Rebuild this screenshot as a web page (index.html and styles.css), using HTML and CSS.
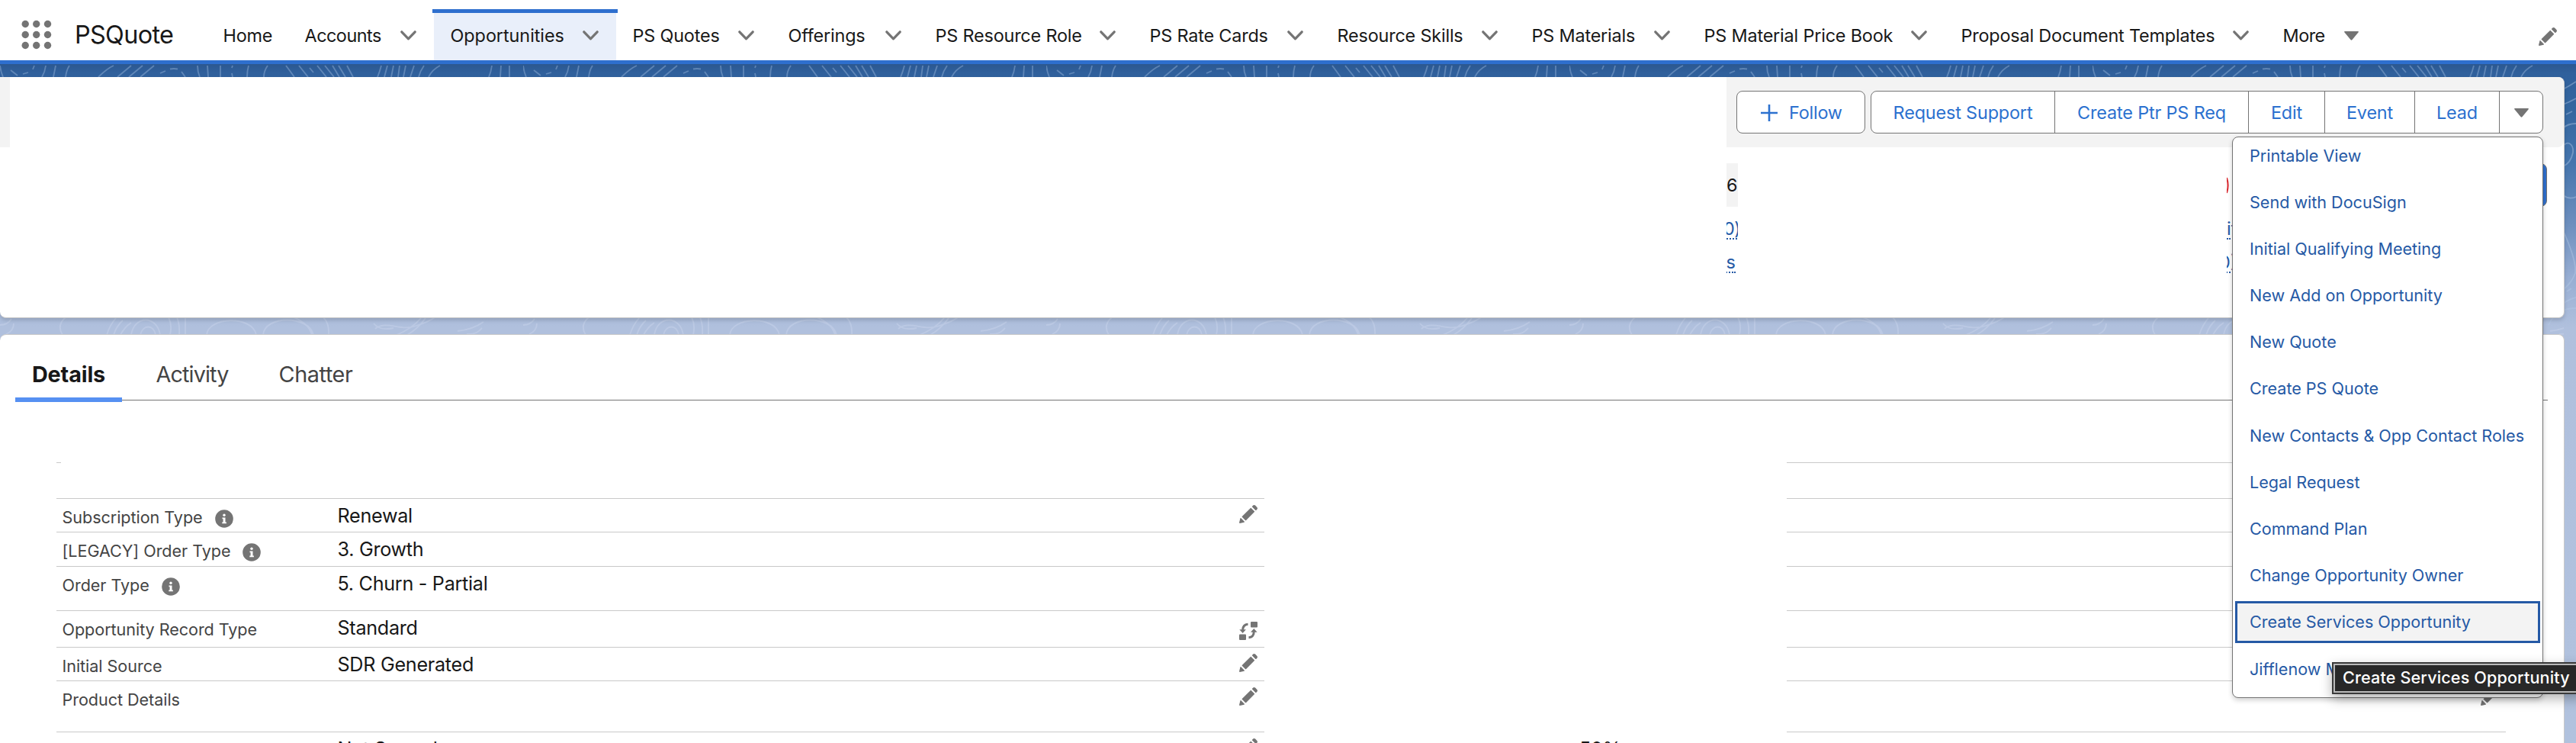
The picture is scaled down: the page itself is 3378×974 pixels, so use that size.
FILE: index.html
```html
<!DOCTYPE html>
<html lang="en">
<head>
<meta charset="utf-8">
<title>PSQuote</title>
<link rel="stylesheet" href="styles.css">
</head>
<body>
<svg class="defs" width="0" height="0">
  <symbol id="chev" viewBox="0 0 21 13"><path d="M1.8 1.8l8.7 9 8.7-9" fill="none" stroke="#747474" stroke-width="3.2" stroke-linecap="round" stroke-linejoin="round"/></symbol>
  <symbol id="down" viewBox="0 0 19 12"><path d="M1 0h17c.9 0 1.200.7.7 1.300l-8.300 9.900c-.5.600-1.300.6-1.800 0L.3 1.300C-.2.700.1 0 1 0z" fill="#747474"/></symbol>
  <symbol id="edit" viewBox="0 0 52 52"><path fill="#747474" d="M9.500 33.400l8.900 8.900c.4.400 1 .4 1.400 0L42 20c.4-.4.4-1 0-1.400l-8.800-8.800c-.4-.4-1-.4-1.400 0L9.500 32.100c-.4.400-.4 1 0 1.300zM36.100 5.700c-.4.400-.4 1 0 1.400l8.800 8.800c.4.400 1 .4 1.400 0l2.500-2.500c1.600-1.500 1.600-3.900 0-5.500l-4.700-4.700c-1.600-1.600-4.100-1.600-5.700 0l-2.300 2.500zM2.100 48.200c-.2 1 .7 1.900 1.700 1.700l10.900-2.600c.4-.1.7-.3.9-.5l.2-.2c.2-.2.3-.9-.1-1.300l-9-9c-.4-.4-1.100-.3-1.300-.1l-.2.200c-.3.300-.4.600-.5.900L2.100 48.200z"/></symbol>
  <symbol id="info" viewBox="0 0 24 24"><circle cx="12" cy="12" r="11.800" fill="#747474"/><circle cx="12" cy="7.200" r="1.700" fill="#fff"/><path d="M9.500 10.400h4v6h1.400v1.800H9.300v-1.800h1.300v-4.200H9.500z" fill="#fff"/></symbol>
  <symbol id="swap" viewBox="0 0 24 24"><g fill="#747474"><rect x="15" y="0" width="9" height="7.500" rx="1"/><rect x="0" y="16.500" width="9" height="7.500" rx="1"/><path d="M.3 10.200h8.600L4.600 15zM15 13.800h8.600L19.300 9z"/></g><path d="M11.500 3.200c-4.500.3-6.700 3-6.900 7.500M12.500 20.800c4.500-.3 6.600-3 6.800-7.500" fill="none" stroke="#747474" stroke-width="3"/></symbol>
</svg>

<header class="nav">
  <svg class="launcher" viewBox="0 0 40 40" fill="#747474"><circle cx="5.200" cy="5.500" r="4.700"/><circle cx="19.700" cy="5.500" r="4.700"/><circle cx="34.500" cy="5.500" r="4.700"/><circle cx="5.200" cy="19.500" r="4.700"/><circle cx="19.700" cy="19.500" r="4.700"/><circle cx="34.500" cy="19.500" r="4.700"/><circle cx="5.200" cy="33.500" r="4.700"/><circle cx="19.700" cy="33.500" r="4.700"/><circle cx="34.500" cy="33.500" r="4.700"/></svg>
  <div class="app">PSQuote</div>
  <nav class="tabs">
    <a>Home</a>
    <a class="tight">Accounts<svg class="chev"><use href="#chev"/></svg></a>
    <a class="on">Opportunities<svg class="chev"><use href="#chev"/></svg></a>
    <a>PS Quotes<svg class="chev"><use href="#chev"/></svg></a>
    <a>Offerings<svg class="chev"><use href="#chev"/></svg></a>
    <a>PS Resource Role<svg class="chev"><use href="#chev"/></svg></a>
    <a>PS Rate Cards<svg class="chev"><use href="#chev"/></svg></a>
    <a>Resource Skills<svg class="chev"><use href="#chev"/></svg></a>
    <a>PS Materials<svg class="chev"><use href="#chev"/></svg></a>
    <a>PS Material Price Book<svg class="chev"><use href="#chev"/></svg></a>
    <a>Proposal Document Templates<svg class="chev"><use href="#chev"/></svg></a>
    <a class="tight">More<svg class="down"><use href="#down"/></svg></a>
  </nav>
  <svg class="edit nav-edit"><use href="#edit"/></svg>
</header>

<main class="page">
  <svg class="waves" width="3378" height="890" fill="none" stroke="#9fbbe0" stroke-width="1.800" stroke-opacity=".42">
    <defs>
      <pattern id="top" width="686" height="17" patternUnits="userSpaceOnUse">
        <path d="M0 2q1 8 4 15M14 8l9 7M30 13l7-2M45 2l-2 5M60 2q-1 8-5 15M73 2l-3 15M91 2q-4 6-5 15M149 2q-9 4-20 15M172 2l-18 15M187 2l-18 15M202 2l-18 15M210 12l7-3M223 6.500q5-1 10 0M238 10l5 7M259 2q0 8 3 15M272 2l1 15M289 2v15M305 2l-1 3M304 12l1 5M326 2q-2 7-2 15M351 2q-5 7-5 15M375 2q6 8 11 15M392 2l12 15M406 5l5 6M416 2l12 15M426 2l12 15M436 2l9 15M444 2l9 15M455 2l8 15M500 2q-2 8-5 15M508 2l-4 15M516 2l-3 15M524 2l-2 15M532 2l-3 15M543 2l-5 15M556 2q-5 7-7 15M577 2q-10 5-15 15M645 2q-1 8-4 15M657 2l-1 15M668 2v15"/>
      </pattern>
      <pattern id="mid" y="332" width="686" height="23" patternUnits="userSpaceOnUse">
        <path d="M0 10q10 0 15-8M8 22q10-4 10-14M86 0q-12 10-4 23M140 23q4-13 12-22M149 23q4-12 12-19M158 23q5-10 14-16M172 23c4-26 34-26 38 0M184 23c3-14 18-14 20 0M221 0q5 10 2 23M232 0q4 10 3 23M243 0v23M271 23c2-24 60-26 65 0M345 23c2-26 60-26 66 0M385 0q20 8 24 23M424 0q8 8 7 23M492 15c14-12 34 4 54-4q18-6 24-11M490 8q8 10 26 6M520 23q20-8 32-22M534 23q14-8 24-22M600 18q20-2 34-12M612 22c14 0 16-4 20-8" stroke-opacity=".34" stroke="#d3def0"/>
      </pattern>
    </defs>
    <rect width="3362" height="17" fill="url(#top)" stroke="none"/>
    <rect y="332" width="3362" height="23" fill="url(#mid)" stroke="none"/>
    <path d="M3361 33q8-4 17-10M3361 53q8-3 17-8M3365 66l8-4M3361 84q6-6 17-6M3361 107c8-8 14 0 13 9q-3 14-13 18M3361 172q8 6 17 2M3361 218q18 40 16 56-4 12-16 22M3366 298l6-4M3361 314q8-6 17-8M3342 342q10-22 36-22" stroke="#b5cae8"/>
  </svg>

  <section class="card summary">
    <div class="hd">
      <div class="blank"></div>
      <div class="actions">
        <button class="follow"><svg viewBox="0 0 22 22"><path d="M11 0v22M0 11h22" stroke="#2c71cf" stroke-width="2.600"/></svg>Follow</button>
        <div class="group">
          <span>Request Support</span><span>Create Ptr PS Req</span><span>Edit</span><span>Event</span><span>Lead</span><span><svg class="down"><use href="#down"/></svg></span>
          <ul class="menu">
            <li>Printable View</li><li>Send with DocuSign</li><li>Initial Qualifying Meeting</li><li>New Add on Opportunity</li><li>New Quote</li><li>Create PS Quote</li><li>New Contacts &amp; Opp Contact Roles</li><li>Legal Request</li><li>Command Plan</li><li>Change Opportunity Owner</li><li class="focus">Create Services Opportunity</li><li>Jifflenow Meeting</li>
          </ul>
        </div>
      </div>
    </div>
    <div class="bd">
      <div class="frag f1"><b>6</b><a class="l1">0)</a><a class="l2">ts</a></div>
      <div class="frag f2"><svg width="4" height="22"><path d="M0 1q3.200 10 0 20" fill="none" stroke="#d8232a" stroke-width="2"/></svg><a class="l1">it</a><a class="l2">0)</a></div>
      <div class="primary"></div>
    </div>
  </section>

  <section class="card details">
    <div class="subtabs"><a class="on">Details</a><a class="act">Activity</a><a>Chatter</a></div>
    <div class="rows">
      <div class="row r0"><div class="l"></div><div class="m"></div><div class="r"></div></div>
      <div class="row r1"><div class="l"></div><div class="m"></div><div class="r"></div></div>
      <div class="row r2"><div class="l"><label>Subscription Type<svg class="info"><use href="#info"/></svg></label><p>Renewal</p><svg class="edit"><use href="#edit"/></svg></div><div class="m"></div><div class="r"></div></div>
      <div class="row r3"><div class="l"><label>[LEGACY] Order Type<svg class="info"><use href="#info"/></svg></label><p>3. Growth</p></div><div class="m"></div><div class="r"></div></div>
      <div class="row r4"><div class="l"><label>Order Type<svg class="info"><use href="#info"/></svg></label><p>5. Churn - Partial</p></div><div class="m"></div><div class="r"></div></div>
      <div class="row r5"><div class="l"><label>Opportunity Record Type</label><p>Standard</p><svg class="swap"><use href="#swap"/></svg></div><div class="m"></div><div class="r"></div></div>
      <div class="row r6"><div class="l"><label>Initial Source</label><p>SDR Generated</p><svg class="edit"><use href="#edit"/></svg></div><div class="m"></div><div class="r"></div></div>
      <div class="row r7"><div class="l"><label>Product Details</label><p></p><svg class="edit"><use href="#edit"/></svg></div><div class="m"></div><div class="r"><svg class="edit"><use href="#edit"/></svg></div></div>
      <div class="row r8"><div class="l"><label></label><p>Not Scored</p><svg class="edit"><use href="#edit"/></svg></div><div class="m"><p>50%</p></div><div class="r"></div></div>
    </div>
  </section>
</main>
<div class="tip">Create Services Opportunity</div>
</body>
</html>
```
FILE: styles.css
```css
* { box-sizing: border-box; }
html, body { height: 974px; overflow: hidden; }
body { margin: 0; position: relative; font-family: Inter, "Liberation Sans", sans-serif; color: #181818; background: #fff; }
p, ul { margin: 0; padding: 0; }
svg { flex: none; display: block; }
.defs { position: absolute; }
.chev { width: 21px; height: 13px; }
.down { width: 19px; height: 12px; }
.edit { width: 26px; height: 26px; }
.info { width: 24px; height: 24px; }
.swap { width: 24px; height: 24px; }

/* global navigation */
.nav { height: 84px; border-bottom: 5px solid #2e6fce; display: flex; align-items: flex-start; padding-left: 28px; }
.launcher { width: 40px; height: 40px; margin-top: 26px; }
.app { width: 203px; padding-left: 30px; font-size: 32.4px; line-height: 40px; margin-top: 26px; letter-spacing: -.68px; }
.tabs { display: grid; grid-template-columns: 107px 191px 239px 204px 193px 281px 246px 255px 226px 337px 422px 144px; margin-top: 12px; height: 67px; font-size: 23.4px; letter-spacing: -.18px; }
.tabs a { display: flex; align-items: center; justify-content: space-between; padding: 5px 23px 3px 21.5px; white-space: nowrap; position: relative; }
.tabs .tight { letter-spacing: -.5px; }
.tabs .on { background: #e9effa; letter-spacing: -.05px; }
.tabs .on::before { content: ""; position: absolute; left: -2px; right: -2px; top: 0; height: 5px; background: #2e6fce; }
.nav-edit { margin: 35px 24px 0 auto; }

/* page backdrop */
.page { position: relative; height: 890px; padding: 17px 15px 0 0; background: linear-gradient(#2c5890 0, #30609c 12px, #34669f 60px, #4575ad 130px, #6d8fbe 210px, #97aed3 280px, #b0c0dd 345px, #b1c2de 100%); }
.waves { position: absolute; left: 0; top: 0; }
.card { position: relative; background: #fff; border: 1px solid #c9c9c9; border-left: 0; border-radius: 8px; }

/* record summary */
.summary { height: 316px; border-top: 0; box-shadow: 0 3px 5px rgba(0,0,0,.14); z-index: 2; }
.hd { height: 92px; background: #f3f3f3; border-radius: 0 8px 8px 0; display: flex; padding-left: 13px; }
.blank { width: 2251px; background: #fff; }
.actions { display: flex; align-items: flex-start; gap: 7px; padding: 18px 0 0 13px; font-size: 23.4px; color: #2c71cf; letter-spacing: -.15px; }
.follow { width: 169px; height: 56px; border: 1px solid #747474; border-radius: 8px; background: #fff; font: inherit; color: inherit; letter-spacing: -.2px; display: flex; align-items: center; padding: 1px 0 0 31px; gap: 15px; }
.follow svg { width: 22px; height: 22px; }
.group { position: relative; z-index: 3; display: grid; grid-template-columns: 240px 254px 100px 118px 111px 57px; width: 882px; height: 56px; border: 1px solid #747474; border-radius: 8px; background: #fff; }
.group span { display: flex; align-items: center; justify-content: center; padding-top: 1px; border-left: 1px solid #747474; white-space: nowrap; }
.group span:first-child { border-left: 0; }
.menu { position: absolute; top: 59px; right: -1px; width: 408px; height: 736px; border: 1px solid #747474; border-radius: 8px; background: #fff; box-shadow: 0 3px 6px rgba(0,0,0,.18); list-style: none; font-size: 21.6px; color: #2559a5; letter-spacing: -.02px; display: grid; grid-auto-rows: 55px; gap: 6.2px; padding: 0 3px; margin: 0; }
.menu li { display: flex; align-items: center; padding-left: 19px; position: relative; top: -4px; white-space: nowrap; }
.menu .focus { background: #f3f3f3; outline: 3px solid #2559a5; outline-offset: -3px; }
.bd { display: flex; }
.frag { overflow: hidden; height: 170px; margin-top: 21px; font-size: 23.4px; line-height: 28px; color: #2559a5; display: flex; flex-direction: column; align-items: flex-start; }
.frag b { font-weight: 400; color: #181818; background: #f3f3f3; width: 15px; height: 57px; line-height: 58px; }
.frag a { border-bottom: 2px dotted #2559a5; height: 28px; }
.f1 { margin-left: 2264px; width: 15px; }
.f1 .l1 { margin: 15px 0 0 -4px; letter-spacing: -.6px; }
.f1 .l2 { margin: 16px 0 0 -8px; }
.f2 { margin-left: 641px; width: 10px; }
.f2 svg { margin: 18px 0 17px; }
.f2 .l1 { margin-top: 15px; }
.f2 .l2 { margin: 16px 0 0 -10px; }
.primary { width: 60px; height: 57px; margin: 21px 0 0 350px; border-radius: 8px; background: #2e6fce; border: 1px solid #747474; }

/* record details */
.details { height: 560px; margin-top: 21px; }
.subtabs { display: flex; gap: 22px; margin: 0 21px 0 20px; height: 86px; border-bottom: 1px solid #747474; font-size: 28.8px; color: #444; letter-spacing: -.42px; }
.subtabs a { width: 140px; height: 88px; padding-top: 34px; line-height: 36px; text-align: center; position: relative; }
.subtabs .act { letter-spacing: -.9px; }
.subtabs .on { color: #181818; font-weight: 700; letter-spacing: -.13px; border-bottom: 6px solid #5690f2; }
.rows { padding-left: 74px; }
.row { display: grid; grid-template-columns: 1584px 685px 943px; }
.l, .r { border-bottom: 1px solid #c9c9c9; display: flex; align-items: flex-start; }
.l label { width: 368.5px; padding: 9px 0 0 7.5px; display: flex; gap: 16px; font-size: 21.6px; line-height: 30px; letter-spacing: -.06px; color: #444; white-space: nowrap; }
.l .info { margin-top: 5px; }
.row p { padding-top: 7px; font-size: 25.2px; line-height: 30px; letter-spacing: -.3px; }
.m p { padding-left: 413px; }
.row .edit, .row .swap { margin: 7px 8px 0 auto; }
.row .swap { margin: 14px 9px 0 auto; }
.r0 { height: 82px; }
.r0 .l { width: 6px; }
.r1 { height: 47px; }
.r2 { height: 44px; }
.r3 { height: 45px; }
.r4 { height: 58px; }
.r5 { height: 48px; }
.r6 { height: 44px; }
.r7 { height: 67px; }
.r8 { height: 60px; }

/* hover title */
.tip { position: absolute; z-index: 5; left: 3058px; top: 868px; width: 330px; height: 42px; padding-left: 12px; background: #282828; border: 2px solid #3a3a3a; box-shadow: inset 0 0 0 2px #b9b9b9, 0 6px 16px rgba(0,0,0,.3); color: #fff; font-size: 21.6px; font-weight: 500; letter-spacing: .13px; line-height: 37px; white-space: nowrap; }
```
